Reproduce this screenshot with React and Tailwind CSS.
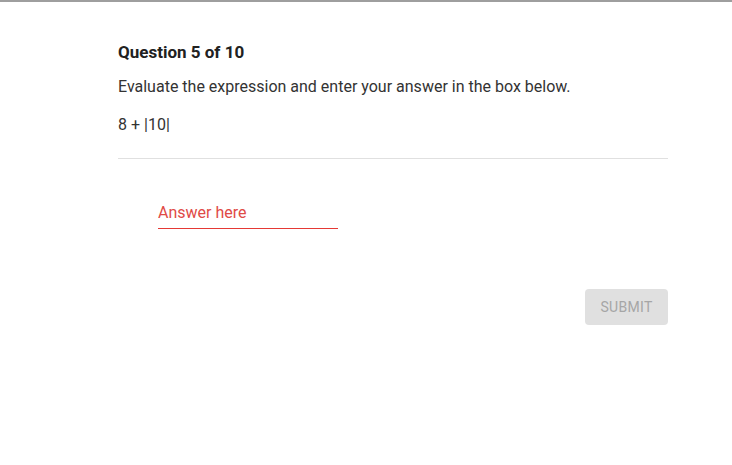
import React, { useState } from "react";

const App = () => {
  const [answer, setAnswer] = useState("");

  return (
    <div className="w-[732px] h-[465px] bg-white border-t-2 border-[#9e9e9e] font-['Roboto',sans-serif] text-[#212121]">
      <div className="w-[550px] ml-[118px] pt-[38px]">
        <h2 className="text-[17px] font-bold leading-[24px]">Question 5 of 10</h2>
        <p className="mt-[11px] text-[16px] leading-[24px] text-[#333]">
          Evaluate the expression and enter your answer in the box below.
        </p>
        <p className="mt-[14px] text-[16px] leading-[24px] text-[#333]">8 + |10|</p>

        <div className="mt-[21px] h-px bg-[#e0e0e0]" />

        {/* Answer input */}
        <div className="ml-[40px] mt-[42px] w-[180px] border-b border-b-[#e53935]">
          <input
            value={answer}
            onChange={(e) => setAnswer(e.target.value)}
            placeholder="Answer here"
            className="w-full pb-[4px] text-[16px] leading-[22px] bg-transparent text-[#e53935] placeholder-[#e04a46] outline-none"
          />
        </div>

        <div className="flex justify-end mt-[60px]">
          <button
            disabled
            className="w-[83px] h-[36px] rounded-[4px] bg-[#e0e0e0] text-[#a6a6a6] text-[14px] font-normal tracking-[0.3px]"
          >
            SUBMIT
          </button>
        </div>
      </div>
    </div>
  );
};

export default App;
